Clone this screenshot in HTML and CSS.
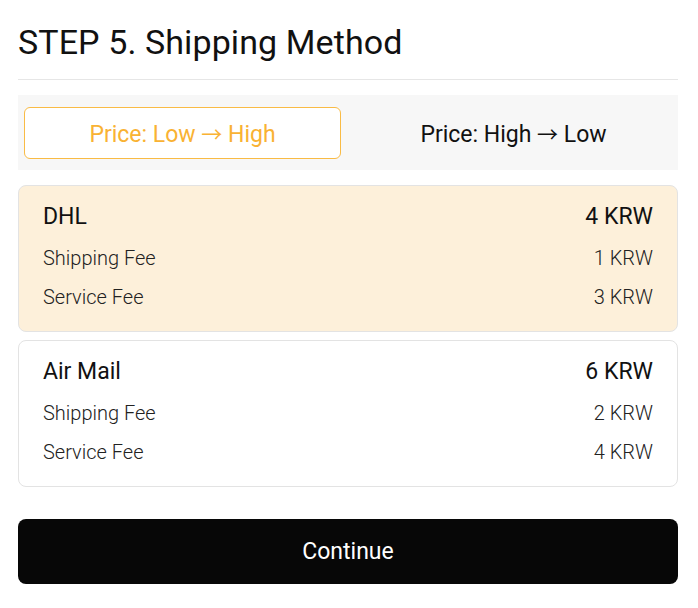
FILE: index.html
```html
<!DOCTYPE html>
<html lang="en">
<head>
<meta charset="utf-8">
<link rel="stylesheet" href="styles.css">
</head>
<body>
<div class="page">
  <h1 class="title">STEP 5. Shipping Method</h1>
  <div class="sort">
    <button class="tab active">Price: Low <span class="arrow">→</span> High</button>
    <button class="tab">Price: High <span class="arrow">→</span> Low</button>
  </div>
  <div class="cards">
    <div class="card selected">
      <div class="row head"><span>DHL</span><span>4 KRW</span></div>
      <div class="row fee"><span>Shipping Fee</span><span>1 KRW</span></div>
      <div class="row fee"><span>Service Fee</span><span>3 KRW</span></div>
    </div>
    <div class="card">
      <div class="row head"><span>Air Mail</span><span>6 KRW</span></div>
      <div class="row fee"><span>Shipping Fee</span><span>2 KRW</span></div>
      <div class="row fee"><span>Service Fee</span><span>4 KRW</span></div>
    </div>
  </div>
  <button class="continue">Continue</button>
</div>
</body>
</html>
```
FILE: styles.css
```css
* { box-sizing: border-box; }
html, body { margin: 0; background: #fff; }
body {
  font-family: Roboto, "Liberation Sans", sans-serif;
  color: #111;
}
.page {
  padding: 0 20px 0 18px;
}
.title {
  margin: 0;
  padding: 22px 0 17px;
  font-size: 34px;
  font-weight: 400;
  line-height: 40px;
  letter-spacing: 0.1px;
  border-bottom: 1px solid #e6e6e6;
}
.sort {
  margin-top: 15px;
  background: #f7f7f7;
  padding: 12px 6px 11px;
  display: grid;
  grid-template-columns: 1fr 1fr;
  gap: 14px;
}
.tab {
  height: 52px;
  border: 1px solid transparent;
  border-radius: 6px;
  background: transparent;
  font-family: inherit;
  font-size: 23px;
  font-weight: 400;
  color: #111;
  padding: 0;
}
.arrow {
  font-family: "Noto Sans CJK SC", "DejaVu Sans", sans-serif;
  font-size: 21px;
}
.tab.active {
  background: #fff;
  border-color: #f9bb45;
  color: #f9b233;
}
.cards {
  margin-top: 15px;
  display: flex;
  flex-direction: column;
  gap: 8px;
}
.card {
  border: 1px solid #e3e3e3;
  border-radius: 8px;
  padding: 16px 24px 22px;
  display: flex;
  flex-direction: column;
  gap: 15px;
  background: #fff;
}
.card.selected {
  background: #fdf0da;
}
.row {
  display: flex;
  justify-content: space-between;
  align-items: center;
}
.head {
  font-size: 23px;
  line-height: 30px;
  font-weight: 400;
  color: #111;
  margin-bottom: -1px;
}
.fee {
  font-size: 20px;
  line-height: 24px;
  font-weight: 300;
  color: #222;
}
.continue {
  display: block;
  width: 100%;
  margin-top: 32px;
  height: 65px;
  border: none;
  border-radius: 8px;
  background: #070707;
  color: #fff;
  font-family: inherit;
  font-size: 23px;
  font-weight: 400;
}
```
